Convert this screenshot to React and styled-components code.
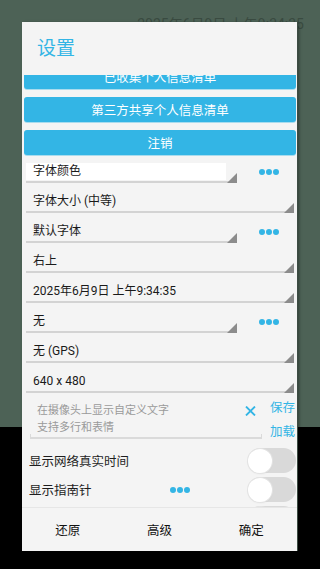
import { useLayoutEffect, useRef } from "react";
import styled, { createGlobalStyle } from "styled-components";

const blue = "#33b5e5";

const GlobalStyle = createGlobalStyle`
  html, body {
    margin: 0;
    padding: 0;
    background: #000;
  }
  body {
    font-family: Roboto, "Noto Sans CJK SC", sans-serif;
  }
`;

const Screen = styled.div`
  position: relative;
  width: 320px;
  height: 569px;
  overflow: hidden;
  background: #000;
  display: flex;
  flex-direction: column;
`;

const Preview = styled.div`
  height: 427px;
  background: #4d6256;
  display: flex;
  justify-content: flex-end;
  padding: 16px 16px 0 0;
  box-sizing: border-box;
`;

const OverlayText = styled.span`
  font-size: 14px;
  line-height: 16px;
  color: #3a4b41;
`;

const Dialog = styled.div`
  position: absolute;
  left: 22px;
  top: 22px;
  width: 275px;
  height: 529px;
  background: #f4f4f4;
  box-shadow: 1px 0 0 #3c4c43, 2px 1px 3px rgba(0, 0, 0, 0.4);
  display: flex;
  flex-direction: column;
`;

const TitleBar = styled.div`
  height: 53px;
  flex-shrink: 0;
  display: flex;
  align-items: center;
  box-sizing: border-box;
  padding: 0 0 4px 15px;
  font-size: 19px;
  color: ${blue};
`;

const Scroll = styled.div`
  flex: 1;
  overflow-y: auto;
  scrollbar-width: none;
  padding: 0 1px 0 2px;
  &::-webkit-scrollbar {
    display: none;
  }
`;

const ButtonGroup = styled.div`
  display: flex;
  flex-direction: column;
  gap: 8px;
`;

const ActionButton = styled.div`
  height: 25px;
  border-radius: 3px;
  background: ${blue};
  box-shadow: 0 1px 0 #a9dcee;
  color: #fff;
  font-size: 12.5px;
  display: flex;
  align-items: center;
  justify-content: center;
`;

const SpinnerRow = styled.div`
  height: 30px;
  display: flex;
  align-items: flex-start;
`;

const Spinner = styled.div`
  position: relative;
  box-sizing: border-box;
  height: 28px;
  margin-left: 2px;
  margin-right: ${(p) => (p.$short ? "0" : "2px")};
  width: ${(p) => (p.$short ? "211px" : "auto")};
  flex: ${(p) => (p.$short ? "none" : "1")};
  border-bottom: 2px solid #d3d3d3;
  display: flex;
  align-items: flex-end;
  &::after {
    content: "";
    position: absolute;
    right: 0;
    bottom: -2px;
    width: 0;
    height: 0;
    border-left: 10px solid transparent;
    border-bottom: 10px solid #8c8c8c;
  }
`;

const SpinnerLabel = styled.div`
  box-sizing: border-box;
  width: calc(100% - 11px);
  height: 17px;
  line-height: 17px;
  margin-bottom: 1px;
  padding-left: 7px;
  font-size: 12px;
  color: #1a1a1a;
  white-space: nowrap;
  background: ${(p) => (p.$focused ? "#fff" : "transparent")};
`;

const DotsButton = styled.div`
  flex: 1;
  height: 28px;
  display: flex;
  align-items: center;
  justify-content: center;
  gap: 1px;
  padding: ${(p) => (p.$inline ? "0" : "3px 0 0 5px")};
  margin-right: ${(p) => (p.$inline ? "18px" : "0")};
`;

const Dot = styled.span`
  width: 6px;
  height: 6px;
  border-radius: 50%;
  background: ${blue};
`;

const EditRow = styled.div`
  height: 51px;
  display: flex;
  align-items: flex-start;
`;

const Field = styled.div`
  position: relative;
  box-sizing: border-box;
  width: 232px;
  margin-left: 6px;
  padding: 7px 6px 1px 7px;
  border-bottom: 2px solid #dadada;
  display: flex;
  align-items: flex-start;
  &::before,
  &::after {
    content: "";
    position: absolute;
    bottom: 0;
    width: 1px;
    height: 3px;
    background: #dadada;
  }
  &::before {
    left: 0;
  }
  &::after {
    right: 0;
  }
`;

const Hint = styled.div`
  flex: 1;
  font-size: 11px;
  line-height: 17px;
  color: #9a9a9a;
`;

const ClearButton = styled.div`
  width: 12px;
  height: 17px;
  display: flex;
  align-items: center;
  justify-content: center;
`;

const SideActions = styled.div`
  margin-left: 8px;
  padding-top: 1px;
  display: flex;
  flex-direction: column;
`;

const SideLink = styled.div`
  height: 24px;
  line-height: 24px;
  font-size: 12.5px;
  color: ${blue};
`;

const SwitchRow = styled.div`
  height: 29px;
  display: flex;
  align-items: center;
  padding-left: 5px;
`;

const SwitchLabel = styled.div`
  flex: 1;
  font-size: 12.5px;
  color: #1e1e1e;
`;

const Track = styled.div`
  width: 48px;
  height: 25px;
  border-radius: 13px;
  background: #d9d9d9;
  display: flex;
  align-items: center;
`;

const Thumb = styled.div`
  width: 24px;
  height: 24px;
  border-radius: 50%;
  background: #fff;
  box-shadow: 0 0 0 1px #e3e3e3, 0 1px 2px rgba(0, 0, 0, 0.08);
`;

const ButtonBar = styled.div`
  height: 44px;
  flex-shrink: 0;
  box-sizing: border-box;
  border-top: 1px solid #e6e6e6;
  display: flex;
`;

const BarButton = styled.div`
  flex: 1;
  display: flex;
  align-items: center;
  justify-content: center;
  font-size: 12.5px;
  color: #111;
`;

const spinners = [
  { label: "字体颜色", short: true, focused: true },
  { label: "字体大小 (中等)" },
  { label: "默认字体", short: true },
  { label: "右上" },
  { label: "2025年6月9日 上午9:34:35" },
  { label: "无", short: true },
  { label: "无 (GPS)" },
  { label: "640 x 480" },
];

const switches = [
  { id: "time", label: "显示网络真实时间" },
  { id: "compass", label: "显示指南针", dots: true },
  { id: "more", label: "" },
];

function Dots({ inline }) {
  return (
    <DotsButton $inline={inline}>
      <Dot />
      <Dot />
      <Dot />
    </DotsButton>
  );
}

function CloseIcon() {
  return (
    <svg width="11" height="10" viewBox="0 0 11 10">
      <path d="M1 0.5 L10 9.5 M10 0.5 L1 9.5" stroke={blue} strokeWidth="1.8" fill="none" />
    </svg>
  );
}

export default function App() {
  const scrollRef = useRef(null);

  useLayoutEffect(() => {
    if (scrollRef.current) scrollRef.current.scrollTop = 11;
  }, []);

  return (
    <Screen>
      <GlobalStyle />
      <Preview>
        <OverlayText>2025年6月9日 上午9:34:35</OverlayText>
      </Preview>
      <Dialog>
        <TitleBar>设置</TitleBar>
        <Scroll ref={scrollRef}>
          <ButtonGroup>
            <ActionButton>已收集个人信息清单</ActionButton>
            <ActionButton>第三方共享个人信息清单</ActionButton>
            <ActionButton>注销</ActionButton>
          </ButtonGroup>
          {spinners.map((s) => (
            <SpinnerRow key={s.label}>
              <Spinner $short={s.short}>
                <SpinnerLabel $focused={s.focused}>{s.label}</SpinnerLabel>
              </Spinner>
              {s.short && <Dots />}
            </SpinnerRow>
          ))}
          <EditRow>
            <Field>
              <Hint>
                在摄像头上显示自定义文字
                <br />
                支持多行和表情
              </Hint>
              <ClearButton>
                <CloseIcon />
              </ClearButton>
            </Field>
            <SideActions>
              <SideLink>保存</SideLink>
              <SideLink>加载</SideLink>
            </SideActions>
          </EditRow>
          {switches.map((s) => (
            <SwitchRow key={s.id}>
              <SwitchLabel>{s.label}</SwitchLabel>
              {s.dots && <Dots inline />}
              <Track>
                <Thumb />
              </Track>
            </SwitchRow>
          ))}
          <SwitchRow />
        </Scroll>
        <ButtonBar>
          <BarButton>还原</BarButton>
          <BarButton>高级</BarButton>
          <BarButton>确定</BarButton>
        </ButtonBar>
      </Dialog>
    </Screen>
  );
}
